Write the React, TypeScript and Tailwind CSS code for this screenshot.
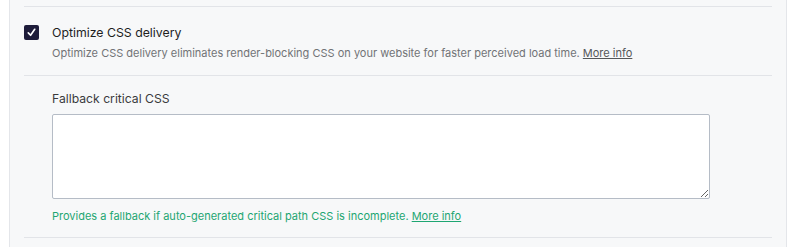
import React from "react";

function Checkbox() {
  return (
    <div className="w-[15px] h-[15px] rounded-[2px] bg-[#1e1c3a] flex items-center justify-center shrink-0">
      <svg width="11" height="11" viewBox="0 0 12 12" fill="none">
        <path d="M2.5 6.5 L5 9 L9.5 2.5" stroke="#fff" strokeWidth="1.8" strokeLinecap="round" strokeLinejoin="round" />
      </svg>
    </div>
  );
}

export default function App() {
  return (
    <div
      className="w-[800px] h-[247px] bg-white overflow-hidden flex"
      style={{ fontFamily: "Inter, 'Noto Sans', sans-serif" }}
    >
      <div className="ml-[9px] w-[778px] border-x border-[#e4e6ea] bg-[#f7f8f9] px-[14px]">
        <div className="border-b border-[#e2e4e8] h-[7px]" />

        {/* option row */}
        <div className="flex gap-[13px] pt-[17px] pb-[14px] border-b border-[#e2e4e8]">
          <div className="pt-[1px]">
            <Checkbox />
          </div>
          <div className="flex flex-col">
            <span className="text-[12.3px] leading-[17px] text-[#1e1e1e]">Optimize CSS delivery</span>
            <span className="mt-[4px] text-[11px] leading-[16px] text-[#717376]">
              Optimize CSS delivery eliminates render-blocking CSS on your website for faster perceived load time.{" "}
              <a className="underline text-[#555759]">More info</a>
            </span>
          </div>
        </div>

        {/* fallback css */}
        <div className="pl-[28px] pt-[14px] pb-[13px] border-b border-[#e2e4e8]">
          <div className="text-[12.2px] leading-[17px] text-[#3a3b3d]">Fallback critical CSS</div>
          <textarea className="mt-[7px] block w-[658px] h-[85px] bg-white border border-[#b5bcc6] rounded-[2px] outline-none resize-y" />
          <div className="mt-[9px] text-[11px] leading-[16px] text-[#1ea672]">
            Provides a fallback if auto-generated critical path CSS is incomplete.{" "}
            <a className="underline">More info</a>
          </div>
        </div>
      </div>
    </div>
  );
}
